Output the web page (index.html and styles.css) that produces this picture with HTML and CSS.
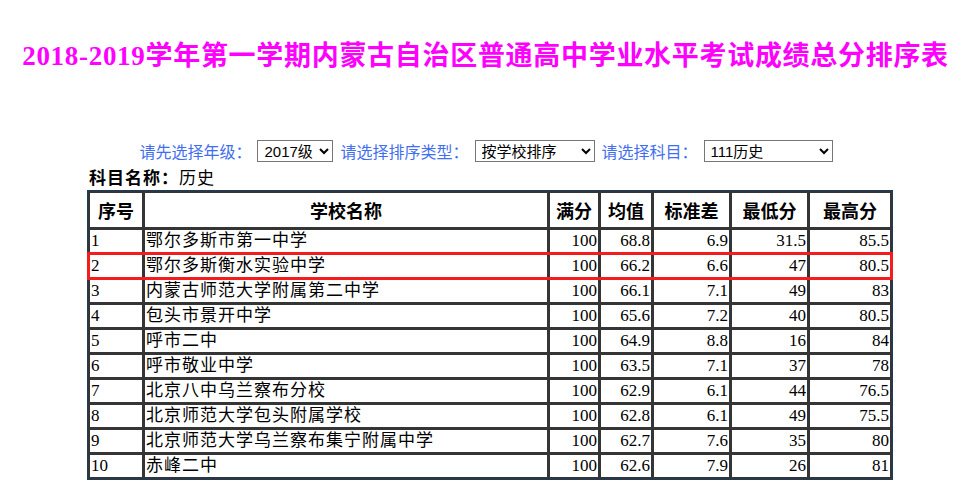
FILE: index.html
```html
<!DOCTYPE html>
<html lang="zh">
<head>
<meta charset="utf-8">
<title>成绩总分排序表</title>
<link rel="stylesheet" href="styles.css">
</head>
<body>
<h1 class="title">2018-2019学年第一学期内蒙古自治区普通高中学业水平考试成绩总分排序表</h1>
<div class="filters">
  <span class="label">请先选择年级：</span>
  <select class="sel sel-grade"><option>2017级</option></select>
  <span class="label">请选择排序类型：</span>
  <select class="sel sel-type"><option>按学校排序</option></select>
  <span class="label">请选择科目：</span>
  <select class="sel sel-subj"><option>111历史</option></select>
</div>
<div class="wrap">
  <div class="subject"><b>科目名称：</b>历史</div>
  <table class="scores">
    <colgroup>
      <col class="c1"><col class="c2"><col class="c3"><col class="c4"><col class="c5"><col class="c6"><col class="c7">
    </colgroup>
    <thead>
      <tr><th>序号</th><th>学校名称</th><th>满分</th><th>均值</th><th>标准差</th><th>最低分</th><th>最高分</th></tr>
    </thead>
    <tbody>
      <tr><td>1</td><td class="name">鄂尔多斯市第一中学</td><td class="num">100</td><td class="num">68.8</td><td class="num">6.9</td><td class="num">31.5</td><td class="num">85.5</td></tr>
      <tr class="hl"><td>2</td><td class="name">鄂尔多斯衡水实验中学</td><td class="num">100</td><td class="num">66.2</td><td class="num">6.6</td><td class="num">47</td><td class="num">80.5</td></tr>
      <tr><td>3</td><td class="name">内蒙古师范大学附属第二中学</td><td class="num">100</td><td class="num">66.1</td><td class="num">7.1</td><td class="num">49</td><td class="num">83</td></tr>
      <tr><td>4</td><td class="name">包头市景开中学</td><td class="num">100</td><td class="num">65.6</td><td class="num">7.2</td><td class="num">40</td><td class="num">80.5</td></tr>
      <tr><td>5</td><td class="name">呼市二中</td><td class="num">100</td><td class="num">64.9</td><td class="num">8.8</td><td class="num">16</td><td class="num">84</td></tr>
      <tr><td>6</td><td class="name">呼市敬业中学</td><td class="num">100</td><td class="num">63.5</td><td class="num">7.1</td><td class="num">37</td><td class="num">78</td></tr>
      <tr><td>7</td><td class="name">北京八中乌兰察布分校</td><td class="num">100</td><td class="num">62.9</td><td class="num">6.1</td><td class="num">44</td><td class="num">76.5</td></tr>
      <tr><td>8</td><td class="name">北京师范大学包头附属学校</td><td class="num">100</td><td class="num">62.8</td><td class="num">6.1</td><td class="num">49</td><td class="num">75.5</td></tr>
      <tr><td>9</td><td class="name">北京师范大学乌兰察布集宁附属中学</td><td class="num">100</td><td class="num">62.7</td><td class="num">7.6</td><td class="num">35</td><td class="num">80</td></tr>
      <tr><td>10</td><td class="name">赤峰二中</td><td class="num">100</td><td class="num">62.6</td><td class="num">7.9</td><td class="num">26</td><td class="num">81</td></tr>
    </tbody>
  </table>
</div>
</body>
</html>
```
FILE: styles.css
```css
html, body {
  background: #ffffff;
}
body {
  margin: 8px;
  font-family: "Liberation Serif", "Noto Sans CJK SC", serif;
  color: #000;
}
.title {
  margin: 33px 0 0;
  font-size: 27px;
  line-height: 30px;
  font-weight: bold;
  letter-spacing: 0.7px;
  color: #ff00ff;
  text-align: center;
  padding-left: 4px;
}
.filters {
  margin-top: 69px;
  display: flex;
  align-items: center;
  justify-content: center;
  padding-left: 5px;
  height: 22px;
}
.label {
  font-family: "Noto Sans CJK SC", sans-serif;
  font-size: 16px;
  color: #3f6ef0;
  line-height: 22px;
  margin-right: 6px;
}
.sel {
  height: 22px;
  font-family: "Liberation Sans", "Noto Sans CJK SC", sans-serif;
  font-size: 15px;
  border: 1px solid #767676;
  border-radius: 0;
  background: #fff;
  color: #000;
  margin-right: 7px;
  padding: 0 0 0 2px;
}
.sel-grade { width: 76px; }
.sel-type { width: 120px; }
.sel-subj { width: 129px; margin-right: 0; }
.wrap {
  width: 806px;
  margin: 7px 0 0 79px;
}
.subject {
  font-family: "Liberation Serif", "Noto Sans CJK SC", serif;
  font-size: 17px;
  line-height: 20px;
  padding-left: 2px;
  letter-spacing: 1px;
}
.subject b {
  font-weight: bold;
}
.scores {
  table-layout: fixed;
  border-collapse: separate;
  border-spacing: 1px;
  border: 1px solid #1d3b5e;
  background: #353535;
  margin-top: 1px;
}
.c1 { width: 54px; }
.c2 { width: 404px; }
.c3 { width: 50px; }
.c4 { width: 52px; }
.c5 { width: 77px; }
.c6 { width: 77px; }
.c7 { width: 82px; }
.scores th, .scores td {
  background: #fff;
  border: 1px solid #353535;
  padding: 0 1px;
}
.scores th {
  height: 34px;
  font-size: 18px;
  font-weight: bold;
  text-align: center;
  vertical-align: middle;
}
.scores td {
  height: 22px;
  font-size: 17px;
  line-height: 22px;
  text-align: left;
  white-space: nowrap;
  overflow: hidden;
  vertical-align: bottom;
}
.scores td.name {
  letter-spacing: 1px;
}
.scores td.num {
  text-align: right;
}
.scores tr.hl {
  outline: 3px solid #f41c1c;
  outline-offset: -1px;
}
```
